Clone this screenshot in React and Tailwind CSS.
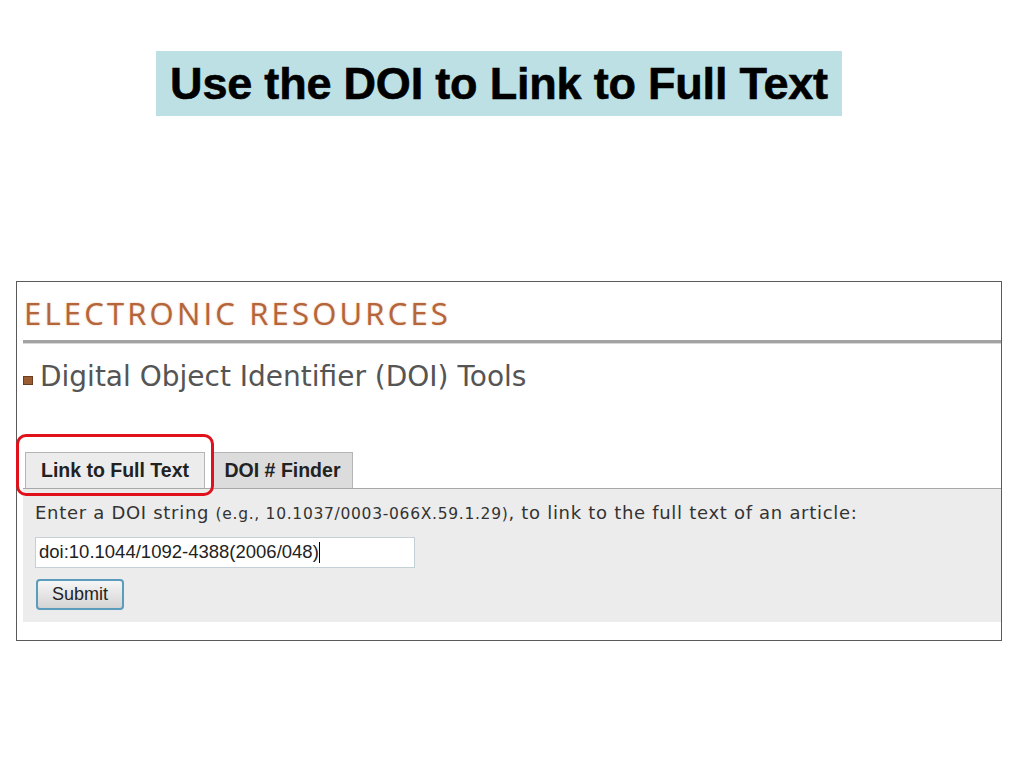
import React from "react";

const Tab = ({ label, active, width }) => (
  <div
    className={`h-[36px] flex items-center justify-center border border-b-0 border-[#b5b5b5] font-bold text-[19.5px] text-[#222] ${
      active ? "bg-[#ececec]" : "bg-[#dcdcdc]"
    } ${width}`}
    style={{ fontFamily: "'Liberation Sans', Arial, sans-serif" }}
  >
    {label}
  </div>
);

const App = () => {
  return (
    <div className="w-[1024px] h-[768px] bg-white pt-[51px] overflow-hidden">
      {/* slide title */}
      <div className="ml-[156px] w-[686px] h-[65px] bg-[#bde0e4] flex items-center justify-center">
        <h1
          className="text-[45px] font-bold text-black leading-none tracking-[-0.2px] whitespace-nowrap"
          style={{ fontFamily: "'Liberation Sans', Arial, sans-serif", WebkitTextStroke: "0.6px black" }}
        >
          Use the DOI to Link to Full Text
        </h1>
      </div>

      {/* screenshot of the web page */}
      <div className="relative mt-[165px] ml-[16px] w-[986px] h-[360px] border border-[#5a5a5a] bg-white">
        <div
          className="pl-[7px] pt-[16px] h-[58px] text-[31px] leading-none tracking-[3.2px] text-[#b5653a]"
          style={{ fontFamily: "'Open Sans', 'DejaVu Sans', sans-serif", textShadow: "0 0 2px rgba(200,120,70,0.5)" }}
        >
          ELECTRONIC RESOURCES
        </div>
        <div className="ml-[6px] h-[4px] bg-[#a3a3a3] border-b border-[#d8d8d8]" />

        <div className="flex items-center gap-[7px] pl-[6px] mt-[16px] h-[34px]">
          <span className="w-[10px] h-[9px] bg-[#9a5c30] border border-[#6b3d20] mt-[6px]" />
          <span
            className="text-[28px] text-[#555] leading-none whitespace-nowrap"
            style={{ fontFamily: "'DejaVu Sans', Verdana, sans-serif" }}
          >
            Digital Object Identifier (DOI) Tools
          </span>
        </div>

        {/* tabs */}
        <div className="flex gap-[7px] ml-[8px] mt-[58px]">
          <Tab label="Link to Full Text" active width="w-[180px]" />
          <Tab label="DOI # Finder" width="w-[141px]" />
        </div>

        <div className="ml-[6px] h-[134px] bg-[#ececec] border-t border-[#a8a8a8] pl-[12px] pt-[15px]">
          <p
            className="text-[18px] text-[#333] leading-none tracking-[0.7px] whitespace-nowrap"
            style={{ fontFamily: "'DejaVu Sans', Verdana, sans-serif" }}
          >
            Enter a DOI string <span className="text-[15.5px]">(e.g., 10.1037/0003-066X.59.1.29)</span>, to link to
            the full text of an article:
          </p>
          <div
            className="mt-[14px] w-[380px] h-[31px] bg-white border border-[#c4d0d8] flex items-center pl-[3px] text-[18.5px] text-[#222]"
            style={{ fontFamily: "'Liberation Sans', Arial, sans-serif" }}
          >
            doi:10.1044/1092-4388(2006/048)
            <span className="w-px h-[21px] bg-black" />
          </div>
          <button
            className="mt-[11px] ml-px w-[88px] h-[31px] rounded-[4px] border-2 border-[#5b9bbb] bg-gradient-to-b from-[#f6f6f6] to-[#d4d4d4] text-[18px] text-[#222]"
            style={{ fontFamily: "'Liberation Sans', Arial, sans-serif" }}
          >
            Submit
          </button>
        </div>

        {/* highlight around the active tab */}
        <div className="absolute left-[-1px] top-[152px] w-[198px] h-[62px] border-[3px] border-[#e0111b] rounded-[10px]" />
      </div>
    </div>
  );
};

export default App;
